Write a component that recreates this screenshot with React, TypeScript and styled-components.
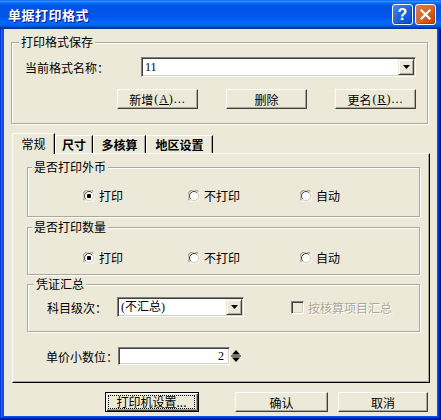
import React from "react";
import styled, { createGlobalStyle } from "styled-components";

const GlobalStyle = createGlobalStyle`
  html, body {
    margin: 0;
    padding: 0;
    background: #fff;
  }
  body {
    font-family: "Liberation Serif", "Noto Sans CJK SC", serif;
    font-size: 12px;
    color: #000;
  }
`;

const Window = styled.div`
  width: 441px;
  height: 420px;
  box-sizing: border-box;
  display: flex;
  flex-direction: column;
  background: #0055ea;
  box-shadow: inset -1px -1px #00138c, inset 1px 1px #0831d9,
    inset -2px -2px #001ea0, inset 2px 2px #166aee, inset -3px -3px #003bda,
    inset 3px 3px #0855dd;
`;

const TitleBar = styled.div`
  height: 29px;
  flex: none;
  display: flex;
  align-items: center;
  padding: 0 5px 0 8px;
  box-sizing: border-box;
  background: linear-gradient(
    180deg,
    #0058ee 0%,
    #3593ff 4%,
    #288eff 6%,
    #127dff 8%,
    #036ffc 10%,
    #0262ee 14%,
    #0057e5 20%,
    #0054e3 24%,
    #0055eb 56%,
    #005bf5 66%,
    #026afe 76%,
    #0062ef 86%,
    #0052d6 92%,
    #0040ab 94%,
    #003092 100%
  );
`;

const TitleText = styled.div`
  color: #fff;
  font-family: "Noto Sans CJK SC", sans-serif;
  font-weight: 700;
  font-size: 13px;
  letter-spacing: 0.5px;
  text-shadow: 1px 1px #0f1089;
  margin-top: -1px;
`;

const TitleButtons = styled.div`
  margin-left: auto;
  display: flex;
  gap: 2px;
`;

const CaptionButton = styled.div<{ $close?: boolean }>`
  width: 21px;
  height: 21px;
  box-sizing: border-box;
  border: 1px solid #fff;
  border-radius: 3px;
  display: flex;
  align-items: center;
  justify-content: center;
  color: #fff;
  font-family: "Liberation Sans", sans-serif;
  font-weight: 700;
  font-size: 16px;
  background: ${(p) =>
    p.$close
      ? "radial-gradient(circle at 90% 90%, #cc4600 0%, #dc6527 55%, #e9774c 100%)"
      : "radial-gradient(circle at 90% 90%, #0054e9 0%, #2263d5 55%, #4d8cf9 100%)"};
  box-shadow: inset -1px -1px 1px rgba(0, 0, 0, 0.25);
`;

const Client = styled.div`
  flex: 1;
  margin: 0 4px 4px 4px;
  background: #ece9d8;
  display: flex;
  flex-direction: column;
  align-items: flex-start;
`;

const Group = styled.div<{ $w: number; $h: number; $top: number; $left: number }>`
  position: relative;
  box-sizing: border-box;
  width: ${(p) => p.$w}px;
  height: ${(p) => p.$h}px;
  margin: ${(p) => p.$top}px 0 0 ${(p) => p.$left}px;
  border: 1px solid #aca899;
  box-shadow: inset 1px 1px #fff, 1px 1px #fff;
  flex: none;
`;

const Legend = styled.span<{ $left: number }>`
  position: absolute;
  top: -8px;
  left: ${(p) => p.$left}px;
  padding: 0 2px;
  line-height: 14px;
  background: #ece9d8;
  font-family: "Noto Sans CJK SC", sans-serif;
`;

const Row = styled.div<{ $pl?: number; $pt?: number }>`
  display: flex;
  align-items: center;
  padding-left: ${(p) => p.$pl ?? 0}px;
  padding-top: ${(p) => p.$pt ?? 0}px;
`;

const Label = styled.span<{ $w?: number }>`
  font-family: "Noto Sans CJK SC", sans-serif;
  width: ${(p) => (p.$w ? `${p.$w}px` : "auto")};
  flex: none;
  white-space: nowrap;
`;

const Sunken = styled.div<{ $w: number; $h: number }>`
  box-sizing: border-box;
  width: ${(p) => p.$w}px;
  height: ${(p) => p.$h}px;
  background: #fff;
  border: 1px solid;
  border-color: #808080 #fff #fff #808080;
  box-shadow: inset 1px 1px #404040, inset -1px -1px #d4d0c8;
  display: flex;
  align-items: center;
  padding: 0 2px 0 3px;
  flex: none;
`;

const FieldText = styled.span<{ $right?: boolean }>`
  flex: 1;
  text-align: ${(p) => (p.$right ? "right" : "left")};
  padding-right: ${(p) => (p.$right ? "3px" : "0")};
  line-height: 14px;
  font-family: "Liberation Serif", "Noto Sans CJK SC", serif;
`;

const DropButton = styled.div`
  width: 16px;
  height: 16px;
  box-sizing: border-box;
  background: #ece9d8;
  border: 1px solid;
  border-color: #ece9d8 #404040 #404040 #ece9d8;
  box-shadow: inset 1px 1px #fff, inset -1px -1px #aca899;
  display: flex;
  align-items: center;
  justify-content: center;
  margin-right: -1px;
`;

const ButtonRow = styled.div<{ $ml: number; $mt: number; $gap: number }>`
  display: flex;
  margin: ${(p) => p.$mt}px 0 0 ${(p) => p.$ml}px;
  gap: ${(p) => p.$gap}px;
`;

const Button = styled.div<{ $w: number; $default?: boolean }>`
  width: ${(p) => p.$w}px;
  height: 20px;
  box-sizing: border-box;
  background: #ece9d8;
  border: 1px solid;
  border-color: ${(p) => (p.$default ? "#000" : "#fff #404040 #404040 #fff")};
  box-shadow: ${(p) =>
    p.$default
      ? "inset 1px 1px #fff, inset -1px -1px #404040, inset -2px -2px #aca899"
      : "inset -1px -1px #aca899"};
  display: flex;
  align-items: center;
  justify-content: center;
  font-family: "Noto Sans CJK SC", sans-serif;
  flex: none;
  margin-left: ${(p) => (p.$default ? "0" : "0")};
`;

const FocusRect = styled.span`
  align-self: stretch;
  flex: 1;
  margin: 3px 4px 3px 3px;
  outline: 1px dotted #000;
  display: flex;
  align-items: center;
  justify-content: center;
  line-height: 12px;
`;

const Accel = styled.span`
  font-family: "Liberation Serif", serif;
  margin-left: 1px;
  letter-spacing: 1px;
`;

const TabStrip = styled.div`
  display: flex;
  align-items: flex-end;
  height: 20px;
  margin: 9px 0 0 8px;
  position: relative;
  z-index: 1;
`;

const Tab = styled.div<{ $w: number; $active?: boolean }>`
  width: ${(p) => p.$w}px;
  height: ${(p) => (p.$active ? 21 : 18)}px;
  margin-bottom: ${(p) => (p.$active ? -1 : 0)}px;
  box-sizing: border-box;
  background: #ece9d8;
  border-top: 1px solid #fff;
  border-left: 1px solid #fff;
  border-right: 1px solid #000;
  border-top-left-radius: 2px;
  box-shadow: inset -1px 0 #aca899;
  display: flex;
  align-items: center;
  justify-content: center;
  padding-bottom: ${(p) => (p.$active ? 2 : 0)}px;
  font-family: "Noto Sans CJK SC", sans-serif;
  font-weight: ${(p) => (p.$active ? 400 : 700)};
  flex: none;
`;

const Panel = styled.div`
  width: 418px;
  height: 230px;
  box-sizing: border-box;
  margin-left: 8px;
  border: 1px solid;
  border-color: #fff #000 #000 #fff;
  box-shadow: inset -1px -1px #aca899;
  display: flex;
  flex-direction: column;
  align-items: flex-start;
`;

const RadioGrid = styled.div`
  display: grid;
  grid-template-columns: 105px 112px auto;
  align-items: center;
`;

const Option = styled.div<{ $disabled?: boolean }>`
  display: flex;
  align-items: center;
  gap: 4px;
  font-family: "Noto Sans CJK SC", sans-serif;
  color: ${(p) => (p.$disabled ? "#aca899" : "#000")};
  text-shadow: ${(p) => (p.$disabled ? "1px 1px #fff" : "none")};
`;

const CheckBox = styled.span`
  width: 13px;
  height: 13px;
  box-sizing: border-box;
  border: 1px solid;
  border-color: #808080 #fff #fff #808080;
  box-shadow: inset 1px 1px #404040, inset -1px -1px #d4d0c8;
  background: #ece9d8;
  flex: none;
`;

const SpinButtons = styled.div`
  width: 12px;
  height: 18px;
  display: flex;
  flex: none;
`;

function Radio({ checked }: { checked?: boolean }) {
  return (
    <svg width="12" height="12" viewBox="0 0 12 12">
      <path d="M1.5 10.5 A6 6 0 0 1 10.5 1.5" stroke="#808080" strokeWidth="1" fill="none" />
      <path d="M10.5 1.5 A6 6 0 0 1 1.5 10.5" stroke="#fff" strokeWidth="1" fill="none" />
      <circle cx="6" cy="6" r="4.5" fill="#fff" />
      <path d="M2.8 9.2 A4.5 4.5 0 0 1 9.2 2.8" stroke="#404040" strokeWidth="1" fill="none" />
      <path d="M9.2 2.8 A4.5 4.5 0 0 1 2.8 9.2" stroke="#d4d0c8" strokeWidth="1" fill="none" />
      {checked && <rect x="4" y="4" width="4" height="4" rx="1" fill="#000" />}
    </svg>
  );
}

function DownArrow() {
  return (
    <svg width="7" height="4" viewBox="0 0 7 4">
      <polygon points="0,0 7,0 3.5,4" fill="#000" />
    </svg>
  );
}

function RadioGroup({ value }: { value: number }) {
  const opts = ["打印", "不打印", "自动"];
  return (
    <RadioGrid>
      {opts.map((o, i) => (
        <Option key={o}>
          <Radio checked={i === value} />
          {o}
        </Option>
      ))}
    </RadioGrid>
  );
}

export default function App() {
  return (
    <>
      <GlobalStyle />
      <Window>
        <TitleBar>
          <TitleText>单据打印格式</TitleText>
          <TitleButtons>
            <CaptionButton>?</CaptionButton>
            <CaptionButton $close>
              <svg width="11" height="11" viewBox="0 0 11 11">
                <path d="M1.5 1.5 L9.5 9.5 M9.5 1.5 L1.5 9.5" stroke="#fff" strokeWidth="2.2" strokeLinecap="square" />
              </svg>
            </CaptionButton>
          </TitleButtons>
        </TitleBar>

        <Client>
          <Group $w={417} $h={82} $top={13} $left={7}>
            <Legend $left={7}>打印格式保存</Legend>
            <Row $pl={13} $pt={14}>
              <Label $w={116}>当前格式名称：</Label>
              <Sunken $w={275} $h={20}>
                <FieldText>11</FieldText>
                <DropButton>
                  <DownArrow />
                </DropButton>
              </Sunken>
            </Row>
            <ButtonRow $ml={105} $mt={12} $gap={28}>
              <Button $w={81}>
                新增<Accel>
                  (<u>A</u>)...
                </Accel>
              </Button>
              <Button $w={81}>删除</Button>
              <Button $w={81}>
                更名<Accel>
                  (<u>R</u>)...
                </Accel>
              </Button>
            </ButtonRow>
          </Group>

          <TabStrip>
            <Tab $w={43} $active>
              常规
            </Tab>
            <Tab $w={38}>尺寸</Tab>
            <Tab $w={53}>多核算</Tab>
            <Tab $w={67}>地区设置</Tab>
          </TabStrip>

          <Panel>
            <Group $w={393} $h={50} $top={13} $left={14}>
              <Legend $left={4}>是否打印外币</Legend>
              <Row $pl={55} $pt={19}>
                <RadioGroup value={0} />
              </Row>
            </Group>

            <Group $w={393} $h={48} $top={10} $left={14}>
              <Legend $left={4}>是否打印数量</Legend>
              <Row $pl={55} $pt={21}>
                <RadioGroup value={0} />
              </Row>
            </Group>

            <Group $w={393} $h={48} $top={9} $left={14}>
              <Legend $left={6}>凭证汇总</Legend>
              <Row $pl={19} $pt={12}>
                <Label $w={70}>科目级次：</Label>
                <Sunken $w={127} $h={20}>
                  <FieldText>(不汇总)</FieldText>
                  <DropButton>
                    <DownArrow />
                  </DropButton>
                </Sunken>
                <Option $disabled style={{ marginLeft: 47 }}>
                  <CheckBox />
                  按核算项目汇总
                </Option>
              </Row>
            </Group>

            <Row $pl={33} $pt={15}>
              <Label $w={72}>单价小数位：</Label>
              <Sunken $w={112} $h={18}>
                <FieldText $right>2</FieldText>
              </Sunken>
              <SpinButtons>
                <svg width="12" height="18" viewBox="0 0 12 18">
                  <polygon points="2,7.5 6,3 10,7.5" fill="#000" />
                  <line x1="1" y1="9" x2="11" y2="9" stroke="#000" strokeWidth="1" />
                  <polygon points="2,10.5 10,10.5 6,15" fill="#000" />
                </svg>
              </SpinButtons>
            </Row>
          </Panel>

          <ButtonRow $ml={101} $mt={9} $gap={0}>
            <Button $w={94} $default>
              <FocusRect>打印机设置...</FocusRect>
            </Button>
            <Button $w={93} style={{ marginLeft: 36 }}>
              确认
            </Button>
            <Button $w={90} style={{ marginLeft: 10 }}>
              取消
            </Button>
          </ButtonRow>
        </Client>
      </Window>
    </>
  );
}
